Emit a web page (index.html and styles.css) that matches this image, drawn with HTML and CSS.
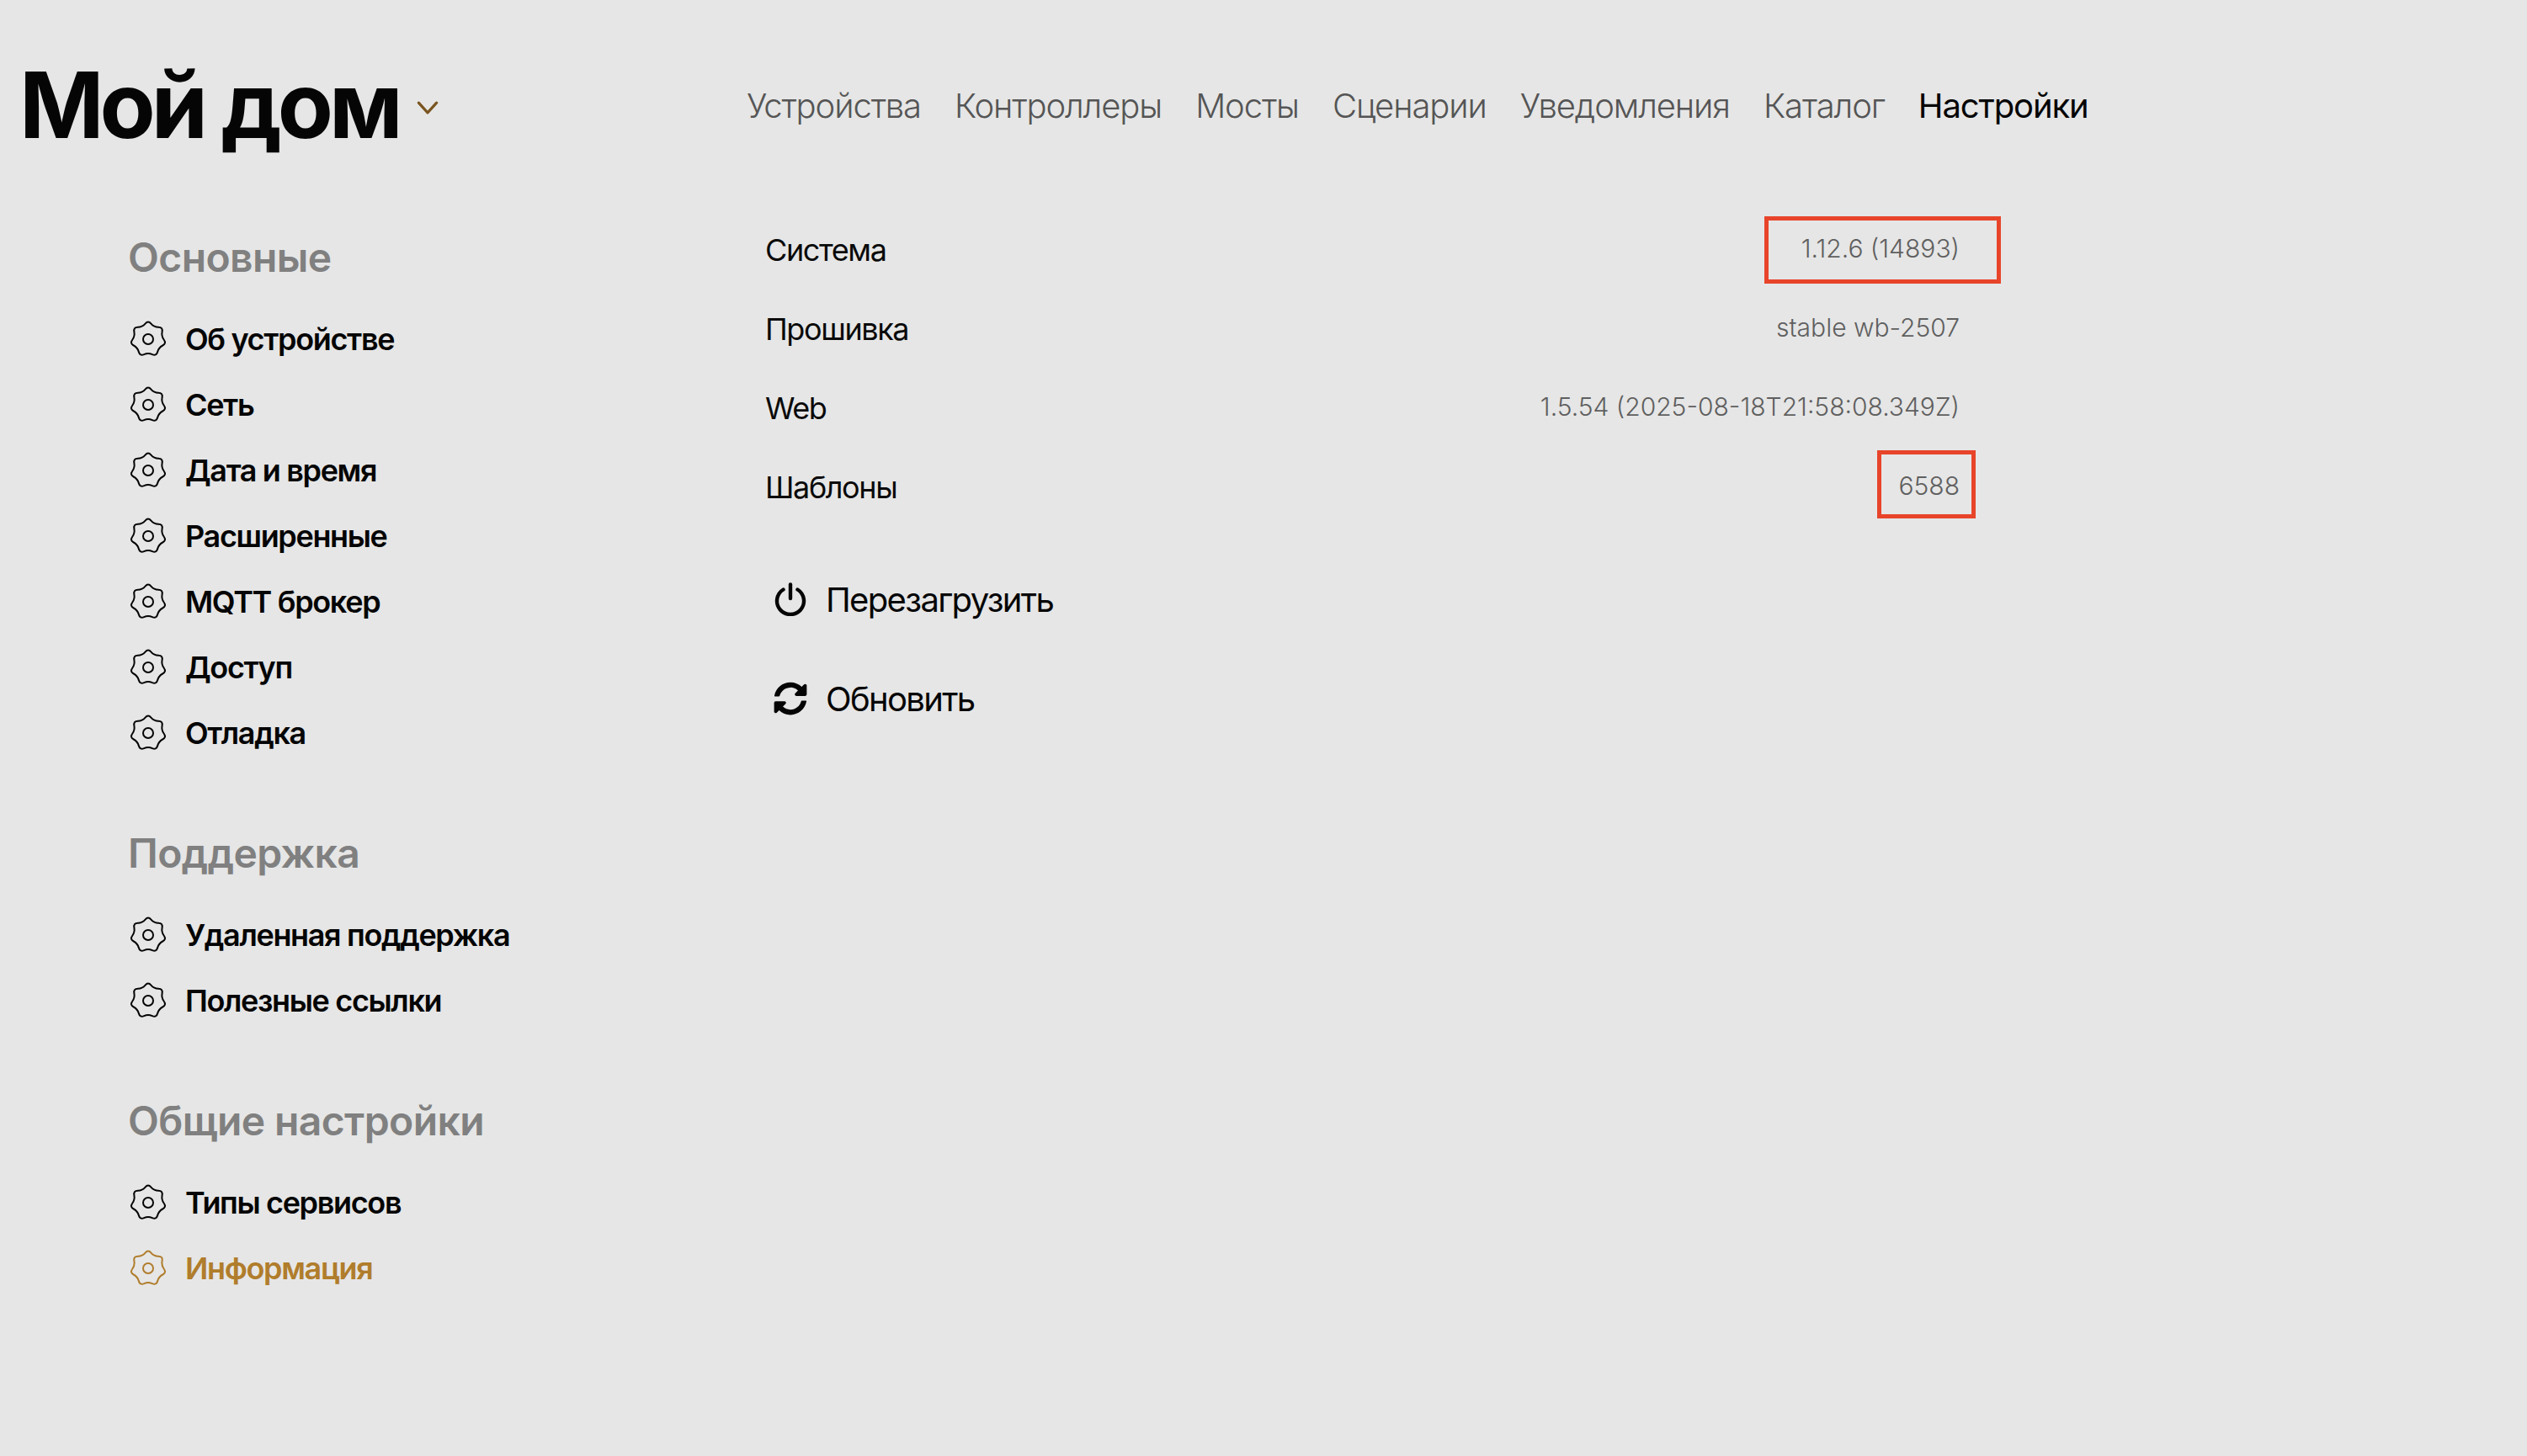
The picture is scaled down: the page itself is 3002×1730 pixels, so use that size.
FILE: index.html
```html
<!DOCTYPE html>
<html lang="ru">
<head>
<meta charset="utf-8">
<title>Мой дом</title>
<link rel="stylesheet" href="styles.css">
</head>
<body>
<svg class="defs" width="0" height="0" aria-hidden="true">
  <symbol id="gear" viewBox="-22 -22 44 44">
    <path d="M-3.47 -18.46Q0 -22.5 3.47 -18.46Q6.94 -14.42 12.27 -14.23Q17.59 -14.03 16.6 -8.8Q15.6 -3.56 18.77 .73Q21.94 5.01 17.23 7.5Q12.51 9.98 11.14 15.13Q9.76 20.27 4.88 18.14Q0 16 -4.88 18.14Q-9.76 20.27 -11.14 15.13Q-12.51 9.98 -17.23 7.5Q-21.94 5.01 -18.77 .73Q-15.6 -3.56 -16.6 -8.8Q-17.59 -14.03 -12.27 -14.23Q-6.94 -14.42 -3.47 -18.46Z" fill="none" stroke="currentColor" stroke-width="2"/>
    <circle r="6" fill="none" stroke="currentColor" stroke-width="2"/>
  </symbol>
</svg>
<header class="top">
  <div class="brand">
    <h1 class="brand-title">Мой дом</h1>
    <svg class="chevron" viewBox="0 0 24 16"><path d="M2 2L12 13L22 2" fill="none" stroke="currentColor" stroke-width="3" stroke-linecap="round" stroke-linejoin="round"/></svg>
  </div>
  <nav class="nav">
    <a class="nav-link">Устройства</a>
    <a class="nav-link">Контроллеры</a>
    <a class="nav-link">Мосты</a>
    <a class="nav-link">Сценарии</a>
    <a class="nav-link">Уведомления</a>
    <a class="nav-link">Каталог</a>
    <a class="nav-link active">Настройки</a>
  </nav>
</header>
<div class="layout">
  <aside class="side">
    <section class="group">
      <h2 class="group-title">Основные</h2>
      <a class="item"><svg class="gear"><use href="#gear"/></svg>Об устройстве</a>
      <a class="item"><svg class="gear"><use href="#gear"/></svg>Сеть</a>
      <a class="item"><svg class="gear"><use href="#gear"/></svg>Дата и время</a>
      <a class="item"><svg class="gear"><use href="#gear"/></svg>Расширенные</a>
      <a class="item"><svg class="gear"><use href="#gear"/></svg>MQTT брокер</a>
      <a class="item"><svg class="gear"><use href="#gear"/></svg>Доступ</a>
      <a class="item"><svg class="gear"><use href="#gear"/></svg>Отладка</a>
    </section>
    <section class="group">
      <h2 class="group-title">Поддержка</h2>
      <a class="item"><svg class="gear"><use href="#gear"/></svg>Удаленная поддержка</a>
      <a class="item"><svg class="gear"><use href="#gear"/></svg>Полезные ссылки</a>
    </section>
    <section class="group">
      <h2 class="group-title">Общие настройки</h2>
      <a class="item"><svg class="gear"><use href="#gear"/></svg>Типы сервисов</a>
      <a class="item current"><svg class="gear"><use href="#gear"/></svg>Информация</a>
    </section>
  </aside>
  <main class="main">
    <div class="rows">
      <div class="row"><span class="label">Система</span><span class="value mark-wide">1.12.6 (14893)</span></div>
      <div class="row"><span class="label">Прошивка</span><span class="value">stable wb-2507</span></div>
      <div class="row"><span class="label">Web</span><span class="value">1.5.54 (2025-08-18T21:58:08.349Z)</span></div>
      <div class="row"><span class="label">Шаблоны</span><span class="value mark-narrow">6588</span></div>
    </div>
    <div class="actions">
      <button class="action">
        <svg class="action-icon" viewBox="0 0 40 40"><path d="M11.5 8.5A16 16 0 1 0 28.5 8.5" fill="none" stroke="currentColor" stroke-width="4.4" stroke-linecap="round"/><path d="M20 2.5V19" fill="none" stroke="currentColor" stroke-width="4.4" stroke-linecap="round"/></svg>
        Перезагрузить
      </button>
      <button class="action">
        <svg class="action-icon" viewBox="0 0 512 512"><path fill="currentColor" d="M370.72 133.28C339.458 104.008 298.888 87.962 255.848 88c-77.458.068-144.328 53.178-162.791 126.85-1.344 5.363-6.122 9.15-11.651 9.15H24.103c-7.498 0-13.194-6.807-11.807-14.176C33.933 94.924 134.813 8 256 8c66.448 0 126.791 26.136 171.315 68.685L463.03 40.97C478.149 25.851 504 36.559 504 57.941V192c0 13.255-10.745 24-24 24H345.941c-21.382 0-32.09-25.851-16.971-40.971l41.75-41.749zM32 296h134.059c21.382 0 32.09 25.851 16.971 40.971l-41.75 41.75c31.262 29.273 71.835 45.319 114.876 45.28 77.418-.07 144.315-53.144 162.787-126.849 1.344-5.363 6.122-9.15 11.651-9.15h57.304c7.498 0 13.194 6.807 11.807 14.176C478.067 417.076 377.187 504 256 504c-66.448 0-126.791-26.136-171.315-68.685L48.97 471.03C33.851 486.149 8 475.441 8 454.059V320c0-13.255 10.745-24 24-24z"/></svg>
        Обновить
      </button>
    </div>
  </main>
</div>
</body>
</html>
```
FILE: styles.css
```css
* { box-sizing: border-box; }
html, body { margin: 0; height: 100%; }
body {
  background: #e6e6e6;
  color: #0a0a0a;
  font-family: Inter, "Noto Sans", sans-serif;
  height: 1730px;
  overflow: hidden;
}
.defs { position: absolute; }
.top {
  display: grid;
  grid-template-columns: 887px 1fr;
  align-items: center;
  height: 250px;
}
.brand {
  display: flex;
  align-items: center;
  padding-left: 23px;
}
.brand-title {
  margin: 0;
  font-size: 108px;
  font-weight: 700;
  letter-spacing: -5px;
  line-height: 130px;
  color: #050505;
}
.chevron {
  width: 26px;
  height: 17px;
  margin: 6px 0 0 21px;
  color: #7a5520;
}
.nav { display: flex; gap: 40px; }
.nav-link {
  font-size: 40px;
  font-weight: 300;
  letter-spacing: -1.1px;
  color: #555;
}
.nav-link.active { color: #050505; font-weight: 400; }
.layout {
  display: grid;
  grid-template-columns: 887px 1fr;
}
.side {
  padding: 23px 0 0 152px;
  display: flex;
  flex-direction: column;
  gap: 71px;
}
.group { display: flex; flex-direction: column; }
.group-title {
  margin: 0 0 25px;
  font-size: 48px;
  font-weight: 600;
  letter-spacing: -.6px;
  line-height: 66px;
  color: #808080;
}
.item {
  display: flex;
  align-items: center;
  gap: 22px;
  height: 78px;
  font-size: 36px;
  font-weight: 600;
  letter-spacing: -1.35px;
  color: #050505;
}
.item.current { color: #b07d2c; }
.gear { width: 44px; height: 44px; flex: none; margin-left: 2px; }
.main { padding-left: 22px; width: 1441px; }
.rows { display: flex; flex-direction: column; }
.row {
  display: flex;
  justify-content: space-between;
  align-items: center;
  height: 94px;
  width: 1419px;
}
.label { font-size: 36px; font-weight: 400; letter-spacing: -1.4px; }
.value {
  position: relative;
  top: -2px;
  font-size: 30px;
  font-weight: 300;
  color: #5f5f5f;
}
.mark-wide::after,
.mark-narrow::after {
  content: "";
  position: absolute;
  border: 5px solid #e8442a;
}
.mark-wide::after { left: -44px; right: -49px; top: -20px; bottom: -24px; }
.mark-narrow::after { left: -25px; right: -19px; top: -24px; bottom: -21px; }
.actions {
  display: flex;
  flex-direction: column;
  margin-top: 27px;
}
.action {
  display: flex;
  align-items: center;
  gap: 22px;
  height: 118px;
  padding: 0 0 0 10px;
  border: 0;
  background: none;
  font: inherit;
  font-size: 40px;
  font-weight: 400;
  letter-spacing: -1.65px;
  color: #050505;
}
.action-icon { width: 40px; height: 40px; flex: none; }
```
